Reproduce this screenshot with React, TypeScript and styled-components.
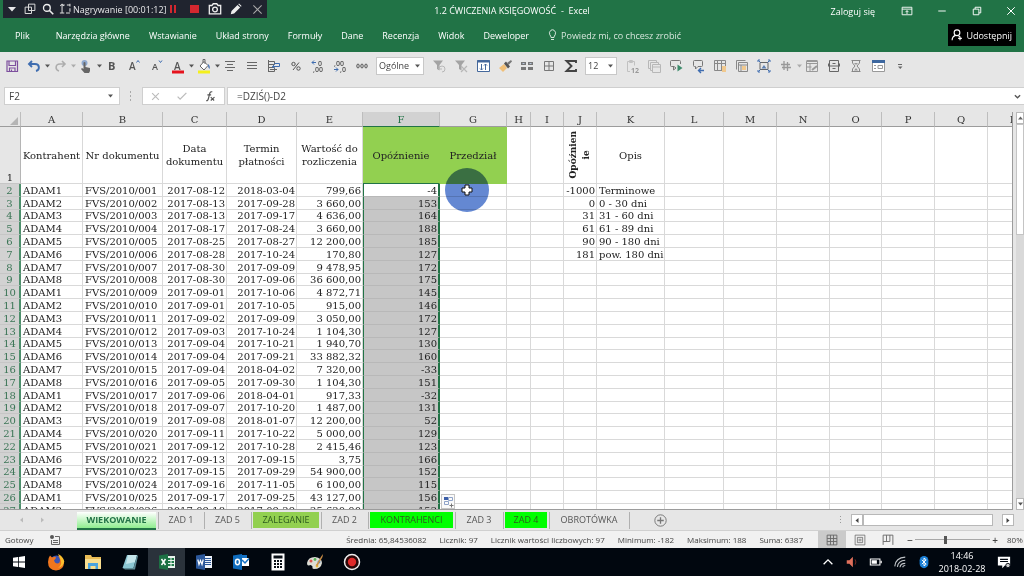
import React from "react";
import styled, { createGlobalStyle, css } from "styled-components";

const ui = `"Open Sans", "Noto Sans", sans-serif`;
const slab = `"DejaVu Serif", serif`;
const green = "#217346";

const GlobalStyle = createGlobalStyle`
  *, *::before, *::after { box-sizing: border-box; }
  body { margin: 0; background: #e6e6e6; font-family: ${ui}; font-size: 9px; color: #444; }
  button, input, select { font: inherit; color: inherit; margin: 0; padding: 0; border: 0; background: none; border-radius: 0; }
  svg { display: block; flex: none; }
`;

const App = styled.div`
  display: flex;
  flex-direction: column;
  height: 100vh;
  overflow: hidden;
`;

/* ---------- title bar and ribbon ---------- */

const Header = styled.header`
  background: ${green};
  color: #fff;
  height: 52px;
  flex: none;
`;

const TitleBar = styled.div`
  display: grid;
  grid-template-columns: 1fr auto 1fr;
  align-items: center;
  height: 20px;
`;

const Recorder = styled.div`
  display: flex;
  align-items: center;
  align-self: start;
  justify-self: start;
  width: 264px;
  height: 18px;
  margin-left: 3px;
  padding: 0 3px 0 2px;
  background: #20242f;
  color: #e8e8ea;
`;

const RecorderText = styled.span`
  white-space: nowrap;
  flex: 1;
  min-width: 0;
`;

const RecorderButton = styled.button`
  display: flex;
  align-items: center;
  justify-content: center;
  width: 14px;
  height: 18px;
  flex: none;
`;

const RecorderGroup = styled.div<{ $gap: number }>`
  display: flex;
  flex: none;
  gap: ${(p) => p.$gap}px;
`;

const DocTitle = styled.h1`
  margin: 2px 0 0;
  font-size: 9px;
  font-weight: 400;
  line-height: 12px;
  white-space: pre;
`;

const WindowControls = styled.div`
  display: flex;
  align-items: center;
  justify-self: end;
  padding: 2px 6px 0 0;
`;

const SignIn = styled.button`
  margin-right: 14px;
  white-space: nowrap;
`;

const WindowButton = styled.button`
  display: flex;
  justify-content: center;
  align-items: center;
  width: 35px;
  height: 16px;
  &:last-child { width: 33px; margin-right: -9px; }
`;

const Ribbon = styled.nav`
  display: flex;
  align-items: center;
  height: 30px;
  padding: 0 8px 0 15px;
`;

const RibbonTab = styled.button<{ $first?: boolean }>`
  margin-right: ${(p) => (p.$first ? 26 : 19)}px;
  white-space: nowrap;
`;

const TellMe = styled.button`
  display: flex;
  align-items: center;
  gap: 4px;
  color: #d6e6dc;
  white-space: nowrap;
`;

const ShareButton = styled.button`
  display: flex;
  align-items: center;
  gap: 3px;
  height: 22px;
  margin-left: auto;
  padding: 0 4px 0 3px;
  background: #000;
  white-space: nowrap;
`;

/* ---------- quick access toolbar ---------- */

const Toolbar = styled.div`
  display: flex;
  align-items: center;
  flex: none;
  height: 27px;
  padding-left: 1px;
`;

const Tool = styled.button<{ $faded?: boolean }>`
  display: flex;
  align-items: center;
  justify-content: center;
  width: 22px;
  height: 22px;
  flex: none;
  opacity: ${(p) => (p.$faded ? 0.6 : 1)};
`;

const CaretButton = styled.button<{ $faded?: boolean }>`
  width: 4px;
  height: 22px;
  flex: none;
  opacity: ${(p) => (p.$faded ? 0.4 : 1)};
`;

const Picker = styled.label<{ $width: number }>`
  display: grid;
  align-items: center;
  width: ${(p) => p.$width}px;
  height: 18px;
  margin: 0 4px 0 3px;
  flex: none;
  background: #fff;
  border: 1px solid #c8c8c8;
  > * { grid-area: 1 / 1; }
  > svg { justify-self: end; margin-right: 3px; pointer-events: none; }
`;

const PickerSelect = styled.select`
  appearance: none;
  width: 100%;
  height: 16px;
  padding-left: 2px;
  font-size: 9px;
  outline: none;
`;

/* ---------- formula bar ---------- */

const FormulaBar = styled.div`
  display: flex;
  align-items: center;
  flex: none;
  height: 33px;
  padding: 1px 0 0 4px;
`;

const NameBox = styled.div`
  display: flex;
  align-items: center;
  width: 116px;
  height: 18px;
  padding: 0 6px 0 4px;
  background: #fff;
  border: 1px solid #cfcfcf;
`;

const NameInput = styled.input`
  flex: 1;
  min-width: 0;
  font-size: 10px;
  outline: none;
`;

const Grip = styled.div`
  display: flex;
  justify-content: center;
  width: 22px;
  flex: none;
`;

const FormulaActions = styled.div`
  display: flex;
  align-items: center;
  justify-content: space-around;
  width: 83px;
  height: 18px;
  margin-right: 2px;
  background: #fff;
  border: 1px solid #cfcfcf;
`;

const FormulaField = styled.div`
  display: flex;
  align-items: center;
  flex: 1;
  height: 18px;
  padding: 0 3px 0 9px;
  background: #fff;
  border: 1px solid #cfcfcf;
  border-right: 0;
`;

/* ---------- sheet ---------- */

const SheetArea = styled.main`
  display: flex;
  flex: 1;
  min-height: 0;
`;

const SheetWindow = styled.div`
  position: relative;
  flex: 1;
  min-width: 0;
  overflow: hidden;
  background: #fff;
  border-right: 1px solid #9c9c9c;
  border-bottom: 1px solid #9c9c9c;
`;

const Sheet = styled.table`
  table-layout: fixed;
  width: 1039px;
  border-collapse: separate;
  border-spacing: 0;
  font-family: ${slab};
  font-size: 10px;
  line-height: 11px;
  color: #222;
`;

const HeadRow = styled.tr`
  height: 15px;
`;

const TitleRow = styled.tr`
  height: 57px;
`;

const DataRow = styled.tr`
  height: 13px;
  &:nth-child(5n + 4) { height: 12px; }
`;

const ColumnHead = styled.th<{ $active?: boolean }>`
  padding: 0;
  font-weight: 400;
  background: ${(p) => (p.$active ? "#d2d2d2" : "#e6e6e6")};
  color: ${(p) => (p.$active ? green : "#333")};
  border-right: 1px solid #bdbdbd;
  border-bottom: 1px solid ${(p) => (p.$active ? green : "#9c9c9c")};
`;

const RowHead = styled.th<{ $active?: boolean }>`
  padding: 0;
  font-weight: 400;
  text-align: center;
  vertical-align: bottom;
  background: #e6e6e6;
  border-right: 1px solid #b5b5b5;
  border-bottom: 1px solid #c6c6c6;
  ${(p) =>
    p.$active &&
    css`
      background: #d2d2d2;
      color: #3b7556;
      vertical-align: middle;
      border-right: 2px solid #4d8f6c;
    `}
`;

const Cell = styled.td<{ $right?: boolean; $state?: "active" | "selected" }>`
  height: inherit;
  padding: 0 1px 0 2px;
  text-align: ${(p) => (p.$right ? "right" : "left")};
  white-space: nowrap;
  border-right: 1px solid #d9d9d9;
  border-bottom: 1px solid #d9d9d9;
  ${(p) =>
    p.$state &&
    css`
      background: ${p.$state === "active" ? "#fff" : "#c6c6c6"};
      border-left: 1px solid ${green};
      border-right: 2px solid ${green};
      border-bottom-color: #b8b8b8;
    `}
`;

const TitleCell = styled.td<{ $fill?: boolean; $edge?: boolean }>`
  padding: 0;
  text-align: center;
  line-height: 13px;
  border-right: 1px solid ${(p) => (p.$fill ? "#92d050" : "#d9d9d9")};
  border-bottom: 1px solid ${(p) => (p.$edge ? green : p.$fill ? "#92d050" : "#d9d9d9")};
  background: ${(p) => (p.$fill ? "#92d050" : "#fff")};
  white-space: pre;
`;

const Rotated = styled.div`
  display: inline-block;
  writing-mode: vertical-rl;
  transform: rotate(180deg);
  font-size: 9px;
  font-weight: 700;
  line-height: 13px;
  vertical-align: middle;
`;

const ClickHalo = styled.div`
  position: absolute;
  left: 445px;
  top: 56px;
  width: 44px;
  height: 44px;
  border-radius: 50%;
  background: #6488d2;
  mix-blend-mode: multiply;
`;

const CursorMark = styled.svg`
  position: absolute;
  left: 461px;
  top: 72px;
`;

const FillOptions = styled.button`
  position: absolute;
  left: 441px;
  top: 382px;
  display: flex;
  align-items: center;
  justify-content: center;
  width: 14px;
  height: 15px;
  background: #fafafa;
  border: 1px solid #c4c4c4;
`;

const VerticalScroll = styled.div`
  display: flex;
  flex-direction: column;
  width: 8px;
  margin-left: 3px;
  flex: none;
  background: #d9d9d9;
`;

const ScrollButton = styled.button`
  display: flex;
  align-items: center;
  justify-content: center;
  min-width: 8px;
  height: 12px;
  flex: none;
  background: #fff;
  border: 1px solid #b8b8b8;
`;

const VerticalThumb = styled.div`
  flex: 0 0 28%;
  background: #fff;
  border: 1px solid #c4c4c4;
`;

const Spacer = styled.div`
  flex: 1;
`;

/* ---------- sheet tabs ---------- */

const TabStrip = styled.div`
  display: flex;
  align-items: center;
  flex: none;
  height: 20px;
  padding-right: 10px;
`;

const TabArrows = styled.div`
  display: flex;
  gap: 14px;
  width: 76px;
  padding-left: 18px;
`;

const TabArrow = styled.button`
  width: 7px;
  height: 8px;
`;

const TabItem = styled.div<{ $width: number }>`
  width: ${(p) => p.$width}px;
  height: 17px;
  padding: 0 2px 0 1px;
  border-right: 1px solid #b0b0b0;
`;

const SheetTab = styled.button<{ $fill?: string; $current?: boolean }>`
  width: 100%;
  height: 16px;
  font-size: 9px;
  text-align: center;
  white-space: nowrap;
  color: ${(p) => (p.$fill ? "#2d5a1e" : "#555")};
  background: ${(p) => p.$fill || "transparent"};
  ${(p) =>
    p.$current &&
    css`
      height: 18px;
      font-weight: 700;
      color: ${green};
      background: linear-gradient(#fff, #8fee8f);
      border-bottom: 2px solid ${green};
    `}
`;

const AddSheet = styled.button`
  margin-left: 24px;
`;

const HorizontalScroll = styled.div`
  display: flex;
  align-items: center;
  width: 163px;
  margin-left: 9px;
  > ${ScrollButton} { width: 12px; }
`;

const HorizontalThumb = styled.div`
  width: 130px;
  height: 12px;
  background: #fff;
  border: 1px solid #b8b8b8;
`;

/* ---------- status bar ---------- */

const StatusBar = styled.footer`
  display: flex;
  align-items: center;
  flex: none;
  height: 18px;
  padding-left: 5px;
  background: #f1f1f1;
  border-top: 1px solid #d0d0d0;
  font-size: 8px;
  white-space: nowrap;
`;

const Summary = styled.div`
  display: flex;
  gap: 13px;
  margin: 0 15px 0 auto;
`;

const ViewButtons = styled.div`
  display: flex;
  margin-right: 3px;
`;

const ViewButton = styled.button<{ $current?: boolean }>`
  display: flex;
  align-items: center;
  justify-content: center;
  width: 28px;
  height: 17px;
  background: ${(p) => (p.$current ? "#cacaca" : "transparent")};
`;

const ZoomStep = styled.button`
  width: 10px;
  height: 14px;
  font-size: 10px;
  line-height: 12px;
  font-weight: 600;
`;

const ZoomRange = styled.input`
  appearance: none;
  width: 75px;
  height: 14px;
  background: linear-gradient(#a8a8a8, #a8a8a8) center / 100% 1px no-repeat;
  &::-webkit-slider-thumb {
    appearance: none;
    width: 3px;
    height: 8px;
    background: #555;
  }
`;

const ZoomValue = styled.output`
  width: 24px;
  padding-left: 7px;
  font-size: 8px;
`;

/* ---------- taskbar ---------- */

const Taskbar = styled.div`
  display: flex;
  align-items: center;
  flex: none;
  height: 28px;
  background: #01070f;
  color: #fff;
`;

const TaskButton = styled.button<{ $active?: boolean }>`
  display: flex;
  align-items: center;
  justify-content: center;
  width: 37px;
  height: 28px;
  background: ${(p) => (p.$active ? "#2a323b" : "transparent")};
`;

const Tray = styled.div`
  display: flex;
  align-items: center;
  margin-left: auto;
  padding-right: 8px;
`;

const TrayButton = styled.button`
  display: flex;
  align-items: center;
  justify-content: center;
  width: 24px;
  height: 28px;
`;

const Clock = styled.time`
  width: 52px;
  margin-right: 4px;
  font-size: 9px;
  line-height: 13px;
  text-align: center;
  white-space: pre;
`;

/* ---------- icons ---------- */

const g = "#666";
const b = "#3f6db0";

const Icon = ({ children, size = 16, stroke = g }: { children: React.ReactNode; size?: number; stroke?: string }) => (
  <svg width={size} height={size} viewBox="0 0 16 16" fill="none" stroke={stroke} strokeWidth="1" aria-hidden="true">
    {children}
  </svg>
);

const Caret = ({ color = "#555" }: { color?: string }) => (
  <svg width="5" height="4" viewBox="0 0 5 4" aria-hidden="true">
    <path d="M0 .5h5L2.5 3.5z" fill={color} />
  </svg>
);

const Glyph = ({ children, x = 3, size = 11, fill = "#555", weight = 600 }: any) => (
  <text x={x} y="12" fontSize={size} fontWeight={weight} fill={fill} stroke="none">
    {children}
  </text>
);

const Funnel = () => <path d="M2 2.500h10L8.500 7v5.500L6 11V7z" fill="#777" stroke="none" />;

const icons: Record<string, React.ReactNode> = {
  save: (
    <Icon stroke="#7d4f9e">
      <path d="M3 3h10.500v10.500H3zM5 3v4.500h6.500V3M5.500 13.500v-3.500h5.500v3.500M7.500 11.500v2" strokeWidth="1.200" />
    </Icon>
  ),
  undo: (
    <Icon stroke={b}>
      <path d="M6 3L3 6l3 3M3.500 6h5.500c5 0 5 6 1 7" strokeWidth="1.900" />
    </Icon>
  ),
  redo: (
    <Icon stroke="#888">
      <path d="M10 3l3 3-3 3M12.500 6H8c-5 0-5 6-1 7" strokeWidth="1.600" />
    </Icon>
  ),
  touch: (
    <Icon stroke="none">
      <circle cx="6.500" cy="5" r="3" fill="#8fa9cf" />
      <path d="M5.500 4.500q1-1 2 0V9l4.500 1v3l-1 2H6.500L3 11l1-1 1.500 1z" fill="#666" />
    </Icon>
  ),
  bold: <Icon><Glyph x={4} weight={700}>B</Glyph></Icon>,
  grow: <Icon><Glyph x={3} size={10}>A</Glyph><path d="M10.500 4.500l1.500-2 1.500 2" stroke={b} /></Icon>,
  shrink: <Icon><Glyph x={4} size={9}>A</Glyph><path d="M11 2.500l1.500 2 1.500-2" stroke={b} /></Icon>,
  fontColor: <Icon><Glyph x={4} size={10}>A</Glyph><path d="M2 14h12" stroke="#e5131d" strokeWidth="3" /></Icon>,
  fill: (
    <Icon>
      <path d="M2 14h12" stroke="#f4f01c" strokeWidth="3" />
      <path d="M4 8l4-4.500 4 4-4 4.500z" fill="#fff" />
      <path d="M7 5V1.500h2V6" />
      <path d="M12 6q2.500 2 1.500 5-1.500-1-1.500-5z" fill={b} stroke="none" />
    </Icon>
  ),
  center: <Icon><path d="M3 3.500h10M5 6.500h6M3 9.500h10M5 12.500h6" /></Icon>,
  lines: <Icon><path d="M3 4.500h10M3 7.500h10M3 10.500h10" /></Icon>,
  wrap: (
    <Icon>
      <path d="M2.500 2v12M2.500 3.500h6v3h-6M2.500 9.500h6v4h-6M4 11.500h7" />
      <path d="M8.500 5.500h5v3h-7M8.500 6.500l-2 2 2 2" stroke={b} />
    </Icon>
  ),
  percent: (
    <Icon stroke="#555">
      <circle cx="5.500" cy="6" r="1.700" />
      <circle cx="10.500" cy="10.500" r="1.700" />
      <path d="M11 4.500l-6 7.500" />
    </Icon>
  ),
  decMore: (
    <Icon>
      <path d="M2 4.500h4M4 2.500l-2 2 2 2" stroke={b} />
      <text x="8" y="8" fontSize="7" fontWeight="600" fill="#555" stroke="none">0</text>
      <text x="3" y="14" fontSize="7" fontWeight="600" fill="#555" stroke="none">,00</text>
    </Icon>
  ),
  decLess: (
    <Icon>
      <text x="2" y="8" fontSize="7" fontWeight="600" fill="#555" stroke="none">,00</text>
      <text x="8" y="14" fontSize="7" fontWeight="600" fill="#555" stroke="none">,0</text>
      <path d="M2 11.500h4M4 9.500l2 2-2 2" stroke={b} />
    </Icon>
  ),
  thousands: (
    <Icon stroke="#555">
      <ellipse cx="4" cy="8" rx="1.200" ry="2" />
      <ellipse cx="8" cy="8" rx="1.200" ry="2" />
      <ellipse cx="12" cy="8" rx="1.200" ry="2" />
    </Icon>
  ),
  filterAgain: <Icon><Funnel /><path d="M8 11a3 3 0 1 1 3 3M8 8v3h3" stroke="#999" /></Icon>,
  filterClear: <Icon><Funnel /><path d="M8 8l6 6M14 8l-6 6" stroke="#999" strokeWidth="1.200" /></Icon>,
  sort: (
    <Icon stroke="#44689c">
      <path d="M2.500 2.500h12v11h-12z" fill="#fff" />
      <path d="M2 3.500h13" strokeWidth="2" />
      <path d="M6.500 6v6M5 10.500l1.500 1.500L8 10.500M10.500 12V6M9 7.500L10.500 6 12 7.500" />
    </Icon>
  ),
  brush: (
    <Icon stroke="none">
      <path d="M2 10l5-4 3 4-4 4z" fill="#f0bf78" />
      <path d="M7 5.500l2-2 4 5-2 2z" fill="#555" />
      <path d="M10 5l4-3 1 1.500-3.500 3.500z" fill="#777" />
    </Icon>
  ),
  blocks: (
    <Icon stroke="none">
      <path d="M2 4h5v3H2zM9 4h5v3H9zM2 9h5v3H2zM9 9h5v3H9z" fill="#777" />
      <path d="M3.500 5.500h2M10.500 5.500h2" stroke="#b9c7dc" />
    </Icon>
  ),
  borders: <Icon><path d="M3.500 3.500h9v9h-9zM8 3.500v9M3.500 8h9" stroke="#777" /></Icon>,
  sum: <Icon><path d="M13 5V3H3.500l5 5-5 5H13v-2" stroke="#444" strokeWidth="1.900" /></Icon>,
  paste: (
    <Icon>
      <path d="M6 13.500H3.500v-10h7v4M5.500 2.500h3v2h-3z" stroke="#aaa" />
      <text x="7" y="15" fontSize="7" fontWeight="700" fill="#666" stroke="none">12</text>
    </Icon>
  ),
  copies: <Icon stroke="#999"><path d="M4 10.500H2.500v-8h8V4M6 12.500H4.500v-8h8V6M6.500 6.500h8v8h-8zM6.500 9h8" /></Icon>,
  comment: <Icon stroke="#777"><path d="M8 10L6 8.500H3.500q-1 0-1-1v-4q0-1 1-1h8q1 0 1 1V6M5.500 9v3L8 10" /><path d="M9.500 6.500l5 3.500-5 3.500z" fill="#3d8c6c" stroke="none" /></Icon>,
  commentBack: <Icon stroke="#777"><path d="M4.500 2.500h7q1 0 1 1v4q0 1-1 1H8l-2.500 2.500V8.500h-1q-1 0-1-1v-4q0-1 1-1z" /><path d="M14 12.500H8.500M11 10l-2.500 2.500L11 15" stroke={b} strokeWidth="1.400" /></Icon>,
  tableCols: <Icon stroke="#888"><path d="M2.500 2.500h11v10h-11zM2.500 5.500h11M5.500 2.500v10M9.500 2.500v10" /><path d="M10 8h4v6h-4z" fill="#f1c98e" stroke="none" /></Icon>,
  tableStack: <Icon stroke="#888"><path d="M2.500 11.500v-9h9M4.500 4.500h9v9h-9zM4.500 7h9M7 7v6.500" /><path d="M8 8h4v4H8z" fill="#f1c98e" stroke="none" /></Icon>,
  group: (
    <Icon>
      <path d="M4 4.500h8v7H4z" /><path d="M5.500 10.500L8 7l2.500 3.500z" fill="#5c7fb1" stroke="none" />
      <path d="M2 4V2h2M12 2h2v2M14 12v2h-2M4 14H2v-2M2.500 2.500l2 2M13.500 2.500l-2 2M2.500 13.500l2-2M13.500 13.500l-2-2" stroke={b} />
    </Icon>
  ),
  hash: <Icon><path d="M6 3v9M9.500 4v9M3 6.500h9M4 9.500h9" stroke="#666" strokeWidth="1.300" /></Icon>,
  sheetEdit: <Icon><path d="M2.500 3.500h11v10h-11zM2.500 5.500h11M2.500 9h5M6 5.500v8" /><path d="M2.500 3h11" strokeWidth="2" /><path d="M8 12l5-4" strokeWidth="2" /></Icon>,
  drawer: <Icon stroke="#666"><path d="M3.500 2.500h9v11h-9zM2 8h12M6.500 5.500h3M6.500 10.500h3M2.500 5.500v2.500M13.500 5.500v2.500" /></Icon>,
  hourglass: <Icon><path d="M3.500 2.500h9M3.500 13.500h9M4.500 3v2L7 8l-2.500 3v2.500M11.500 3v2L9 8l2.500 3v2.500" stroke="#888" /><path d="M6 12.500L8 10l2 2.500zM6 5h4L8 7z" fill="#999" stroke="none" /></Icon>,
  form: <Icon stroke="#999"><path d="M2.500 3.500h12v10h-12z" fill="#fff" /><path d="M2 3.500h13" stroke="#3d679f" strokeWidth="3" /><path d="M4 7.500h2M4 10.500h2M8 7.500h4.500v3H8z" stroke="#999" /></Icon>,
  more: <Icon><path d="M6 6.500h4" /><path d="M6 8.500h4.500l-2.250 2.500z" fill={g} stroke="none" /></Icon>,
};

type ToolSpec = { id: string; label: string; menu?: boolean; faded?: boolean };

const toolsLeft: ToolSpec[] = [
  { id: "save", label: "Zapisz" },
  { id: "undo", label: "Cofnij", menu: true },
  { id: "redo", label: "Ponów", menu: true, faded: true },
  { id: "touch", label: "Tryb dotyku", menu: true },
  { id: "bold", label: "Pogrubienie" },
  { id: "grow", label: "Zwiększ czcionkę" },
  { id: "shrink", label: "Zmniejsz czcionkę" },
  { id: "fontColor", label: "Kolor czcionki", menu: true },
  { id: "fill", label: "Kolor wypełnienia", menu: true },
  { id: "center", label: "Wyśrodkuj" },
  { id: "lines", label: "Wyrównaj do środka" },
  { id: "wrap", label: "Zawijaj tekst" },
  { id: "percent", label: "Procent" },
  { id: "decMore", label: "Zwiększ dziesiętne" },
  { id: "decLess", label: "Zmniejsz dziesiętne" },
  { id: "thousands", label: "Zapis dziesiętny" },
];

const toolsMiddle: ToolSpec[] = [
  { id: "filterAgain", label: "Zastosuj filtr ponownie", faded: true },
  { id: "filterClear", label: "Wyczyść filtr", faded: true },
  { id: "sort", label: "Sortuj" },
  { id: "brush", label: "Malarz formatów" },
  { id: "blocks", label: "Scal komórki" },
  { id: "borders", label: "Obramowanie" },
  { id: "sum", label: "Autosumowanie" },
];

const toolsRight: ToolSpec[] = [
  { id: "paste", label: "Wklej wartości", faded: true },
  { id: "copies", label: "Kopiuj", faded: true },
  { id: "comment", label: "Następny komentarz" },
  { id: "commentBack", label: "Poprzedni komentarz" },
  { id: "tableCols", label: "Kolumny tabeli" },
  { id: "tableStack", label: "Tabela" },
  { id: "group", label: "Zaznacz obiekty" },
  { id: "hash", label: "Siatka", menu: true, faded: true },
  { id: "sheetEdit", label: "Edytuj arkusz", faded: true },
  { id: "drawer", label: "Formularz danych" },
  { id: "hourglass", label: "Przelicz" },
  { id: "form", label: "Okno formularza" },
  { id: "more", label: "Dostosuj pasek" },
];

const Tools = ({ items }: { items: ToolSpec[] }) => (
  <>
    {items.map((t) => (
      <React.Fragment key={t.id}>
        <Tool aria-label={t.label} $faded={t.faded}>{icons[t.id]}</Tool>
        {t.menu && (
          <CaretButton aria-label={`${t.label}: opcje`} $faded={t.faded}><Caret /></CaretButton>
        )}
      </React.Fragment>
    ))}
  </>
);

/* ---------- data ---------- */

const ribbonTabs = ["Plik", "Narzędzia główne", "Wstawianie", "Układ strony", "Formuły", "Dane", "Recenzja", "Widok", "Deweloper"];

const columns: [string, number][] = [
  ["A", 62], ["B", 80], ["C", 64], ["D", 70], ["E", 66], ["F", 77], ["G", 67], ["H", 24], ["I", 33],
  ["J", 33], ["K", 68], ["L", 59], ["M", 53], ["N", 53], ["O", 52], ["P", 53], ["Q", 53], ["R", 52],
];

const rows: [string, string, string, number][] = [
  ["2017-08-12", "2018-03-04", "799,66", -4],
  ["2017-08-13", "2017-09-28", "3 660,00", 153],
  ["2017-08-13", "2017-09-17", "4 636,00", 164],
  ["2017-08-17", "2017-08-24", "3 660,00", 188],
  ["2017-08-25", "2017-08-27", "12 200,00", 185],
  ["2017-08-28", "2017-10-24", "170,80", 127],
  ["2017-08-30", "2017-09-09", "9 478,95", 172],
  ["2017-08-30", "2017-09-06", "36 600,00", 175],
  ["2017-09-01", "2017-10-06", "4 872,71", 145],
  ["2017-09-01", "2017-10-05", "915,00", 146],
  ["2017-09-02", "2017-09-09", "3 050,00", 172],
  ["2017-09-03", "2017-10-24", "1 104,30", 127],
  ["2017-09-04", "2017-10-21", "1 940,70", 130],
  ["2017-09-04", "2017-09-21", "33 882,32", 160],
  ["2017-09-04", "2018-04-02", "7 320,00", -33],
  ["2017-09-05", "2017-09-30", "1 104,30", 151],
  ["2017-09-06", "2018-04-01", "917,33", -32],
  ["2017-09-07", "2017-10-20", "1 487,00", 131],
  ["2017-09-08", "2018-01-07", "12 200,00", 52],
  ["2017-09-11", "2017-10-22", "5 000,00", 129],
  ["2017-09-12", "2017-10-28", "2 415,46", 123],
  ["2017-09-13", "2017-09-15", "3,75", 166],
  ["2017-09-15", "2017-09-29", "54 900,00", 152],
  ["2017-09-16", "2017-11-05", "6 100,00", 115],
  ["2017-09-17", "2017-09-25", "43 127,00", 156],
  ["2017-09-18", "2017-09-29", "25 620,00", 152],
];

const ranges: [string, string][] = [
  ["-1000", "Terminowe"],
  ["0", "0 - 30 dni"],
  ["31", "31 - 60 dni"],
  ["61", "61 - 89 dni"],
  ["90", "90 - 180 dni"],
  ["181", "pow. 180 dni"],
];

const sheetTabs: { name: string; width: number; fill?: string; current?: boolean }[] = [
  { name: "WIEKOWANIE", width: 83, current: true },
  { name: "ZAD 1", width: 46 },
  { name: "ZAD 5", width: 47 },
  { name: "ZALEGANIE", width: 70, fill: "#92d050" },
  { name: "ZAD 2", width: 47 },
  { name: "KONTRAHENCI", width: 87, fill: "#00ff00" },
  { name: "ZAD 3", width: 48 },
  { name: "ZAD 4", width: 46, fill: "#00ff00" },
  { name: "OBROTÓWKA", width: 80 },
];

const summary = ["Średnia: 65,84536082", "Licznik: 97", "Licznik wartości liczbowych: 97", "Minimum: -182", "Maksimum: 188", "Suma: 6387"];

const taskIcons: { label: string; active?: boolean; icon: React.ReactNode }[] = [
  { label: "Start", icon: <svg width="14" height="14" viewBox="0 0 14 14" fill="#fff"><path d="M1 2.800l5-.700v4.500H1zM6.800 2L13 1v5.600H6.800zM1 7.400h5V12l-5-.700zM6.800 7.400H13V13l-6.200-.900z" /></svg> },
  {
    label: "Firefox",
    icon: (
      <svg width="18" height="18" viewBox="0 0 18 18">
        <circle cx="9.500" cy="9.500" r="7" fill="#3b55b5" />
        <path d="M1 9Q1 5 3 2.500L5 4.500Q9 3 9 5L7 7.500l1 2q2.500 2 4.500 0Q14 6 11 3q5 1 6 6 0 8-8 8.500Q1 17 1 9z" fill="#f0761e" />
        <path d="M11 1q5 2 6.300 7.500-1 5-6.300 6.500 4-3 3-7-1-3-3-7z" fill="#fbc02d" />
      </svg>
    ),
  },
  {
    label: "Eksplorator plików",
    icon: (
      <svg width="18" height="16" viewBox="0 0 18 16">
        <path d="M1 1h6l1 2h9v12H1z" fill="#e9bd57" /><path d="M1 5h16v10H1z" fill="#f9de8f" />
        <path d="M4 9h10v6h-2.500v-3h-5v3H4z" fill="#4aa3df" />
      </svg>
    ),
  },
  {
    label: "Notatnik",
    icon: (
      <svg width="18" height="18" viewBox="0 0 18 18">
        <path d="M6 2h10l-3.500 13H1.500z" fill="#8cc7d3" /><path d="M7 2h9l-2 7-9 2z" fill="#c4e5ea" /><path d="M1.500 15l11 0 3.500-13 1 1-3 13.500H4z" fill="#5d8b96" />
      </svg>
    ),
  },
  {
    label: "Excel",
    active: true,
    icon: (
      <svg width="18" height="18" viewBox="0 0 18 18">
        <path d="M8 3h9v12H8z" fill="#e9f3ed" /><path d="M10 5h2.500v2H10zM13.500 5H16v2h-2.500zM10 8h2.500v2H10zM13.500 8H16v2h-2.500zM10 11h2.500v2H10zM13.500 11H16v2h-2.500z" fill="#1f7a48" />
        <path d="M1 2.500L10 1v16l-9-1.500z" fill="#1d7044" /><path d="M3.500 6l4 6M7.500 6l-4 6" stroke="#fff" strokeWidth="1.500" />
      </svg>
    ),
  },
  {
    label: "Word",
    icon: (
      <svg width="18" height="18" viewBox="0 0 18 18">
        <path d="M8 3h9v12H8z" fill="#eef3fa" /><path d="M10 5.500h6M10 7.500h6M10 9.500h6M10 11.500h6" stroke="#2b579a" />
        <path d="M1 2.500L10 1v16l-9-1.500z" fill="#2b579a" /><path d="M2.800 6.500L4 11.500l1.500-4 1.500 4 1.200-5" stroke="#fff" strokeWidth="1.200" fill="none" />
      </svg>
    ),
  },
  {
    label: "Outlook",
    icon: (
      <svg width="18" height="18" viewBox="0 0 18 18">
        <path d="M8 2h7v4H8z" fill="#1471c4" /><path d="M8 5h9v8H8z" fill="#fff" /><path d="M10 7l3 3 4-4.500" stroke="#1471c4" strokeWidth="1.500" fill="none" />
        <path d="M1 2.500L10 1v16l-9-1.500z" fill="#0f6cbd" /><ellipse cx="5.500" cy="9" rx="2" ry="2.700" stroke="#fff" strokeWidth="1.500" fill="none" />
      </svg>
    ),
  },
  {
    label: "Kalkulator",
    icon: (
      <svg width="14" height="18" viewBox="0 0 14 18">
        <rect x=".500" y=".500" width="13" height="17" fill="#fff" /><path d="M2.500 2.500h9v3h-9z" fill="#0b1118" />
        <path d="M3 8h2M6 8h2M9 8h2M3 11h2M6 11h2M9 11h2M3 14h2M6 14h2M9 14h2" stroke="#0b1118" strokeWidth="1.800" />
      </svg>
    ),
  },
  {
    label: "Paint",
    icon: (
      <svg width="18" height="18" viewBox="0 0 18 18">
        <path d="M1 10q1-6 8-6 7 1 7 6-1 6-8 6-2 0-1.500-2.500Q5 11 3 12.500 1 13 1 10z" fill="#dcdcd4" />
        <circle cx="5" cy="8" r="1.500" fill="#d9534f" /><circle cx="9" cy="6.500" r="1.400" fill="#5cb85c" /><circle cx="13" cy="9" r="1.400" fill="#3f7fd0" /><circle cx="11" cy="13" r="1.400" fill="#e9b63a" />
        <path d="M10 12l5.500-9 1.500-2-.500 3-5 9z" fill="#c98d46" />
      </svg>
    ),
  },
  {
    label: "Rejestrator ekranu",
    icon: (
      <svg width="18" height="18" viewBox="0 0 18 18">
        <circle cx="9" cy="9" r="7.500" fill="#2a0808" stroke="#eee" strokeWidth="1.500" /><circle cx="9" cy="9" r="4.200" fill="#e02a2a" />
      </svg>
    ),
  },
];

const trayIcons: { label: string; icon: React.ReactNode }[] = [
  { label: "Pokaż ukryte ikony", icon: <Icon size={14} stroke="#fff"><path d="M3 10.500l5-5 5 5" strokeWidth="1.500" /></Icon> },
  { label: "Głośność", icon: <Icon size={14}><path d="M2 6h3l4-4v12L5 10H2z" fill="#e0705c" stroke="none" /><path d="M11.500 5q2 3 0 6" stroke="#7c2a22" /></Icon> },
  { label: "Bateria", icon: <Icon size={14} stroke="#fff"><path d="M1.500 4.500h11v7h-11zM14 6.500v3" strokeWidth="1.200" /><path d="M3 6h6v4H3z" fill="#fff" stroke="none" /></Icon> },
  { label: "Sieć", icon: <Icon size={14} stroke="#bfc3c7"><path d="M2 13Q3 3 14 2.500M5 13.500Q6 6.500 14 6M8 14Q8.500 9.500 14 9.500M11 14q.500-2 3-2" strokeWidth="1.300" /></Icon> },
  { label: "Bluetooth", icon: <Icon size={14} stroke="#fff"><rect x="3" y="1" width="10" height="14" rx="5" fill="#1a7fd6" stroke="none" /><path d="M5.500 5.500l5 5-2.500 2v-9l2.500 2-5 5" strokeWidth="1.100" /></Icon> },
];

const RecorderBar = () => (
  <Recorder>
    <RecorderGroup $gap={4}>
      <RecorderButton aria-label="Menu nagrywania"><svg width="8" height="6" viewBox="0 0 8 6"><path d="M0 1h8L4 5.500z" fill="#e8e8ea" /></svg></RecorderButton>
      <RecorderButton aria-label="Okna"><Icon size={12} stroke="#ddd"><path d="M6 1.500h8.500V10H6zM1.500 5.500h8.500V14H1.500z" strokeWidth="1.300" /></Icon></RecorderButton>
      <RecorderButton aria-label="Lupa"><Icon size={12} stroke="#eee"><circle cx="6.500" cy="6.500" r="4.500" strokeWidth="1.800" /><path d="M10 10l5 5" strokeWidth="2.200" /></Icon></RecorderButton>
      <RecorderButton aria-label="Obszar nagrywania"><Icon size={14} stroke="#ddd"><path d="M3.500 4v9M1 12.500h5M3.500 3.500h3M9 3.500h4M12.500 2v3M12.500 7v4M12.500 12.500H8M1.500 4.500l2-2 2 2" strokeWidth="1.200" /></Icon></RecorderButton>
    </RecorderGroup>
    <RecorderText>Nagrywanie [00:01:12]</RecorderText>
    <RecorderGroup $gap={7}>
      <RecorderButton aria-label="Wstrzymaj"><svg width="7" height="8" viewBox="0 0 7 8"><path d="M0 0h2v8H0zM4 0h2v8H4z" fill="#d3272f" /></svg></RecorderButton>
      <RecorderButton aria-label="Zatrzymaj"><svg width="9" height="8" viewBox="0 0 9 8"><path d="M0 0h9v8H0z" fill="#d3272f" /></svg></RecorderButton>
      <RecorderButton aria-label="Zrzut ekranu"><Icon size={14} stroke="#eee"><path d="M1.500 4h3L6 2h4l1.500 2h3v9.500h-13z" strokeWidth="1.500" /><circle cx="8" cy="8.500" r="2.700" strokeWidth="1.500" /></Icon></RecorderButton>
      <RecorderButton aria-label="Rysuj"><Icon size={12} stroke="none"><path d="M1 15l1-4.500L10 2.500 13.500 6l-8 8zM11 1.500l1-1 3.500 3.500-1 1z" fill="#eee" /></Icon></RecorderButton>
      <RecorderButton aria-label="Zamknij nagrywanie"><Icon size={11} stroke="#aaa"><path d="M2 2l12 12M14 2L2 14" strokeWidth="1.500" /></Icon></RecorderButton>
    </RecorderGroup>
  </Recorder>
);

const SheetGrid = () => (
  <Sheet>
    <colgroup>
      <col width={21} />
      {columns.map(([name, width]) => <col key={name} width={width} />)}
    </colgroup>
    <thead>
      <HeadRow>
        <ColumnHead><svg width="20" height="13" viewBox="0 0 20 13"><path d="M18 4v8h-8z" fill="#b5b5b5" /></svg></ColumnHead>
        {columns.map(([name]) => <ColumnHead key={name} scope="col" $active={name === "F"}>{name}</ColumnHead>)}
      </HeadRow>
    </thead>
    <tbody>
      <TitleRow>
        <RowHead scope="row">1</RowHead>
        <TitleCell>Kontrahent</TitleCell>
        <TitleCell>Nr dokumentu</TitleCell>
        <TitleCell>{"Data\ndokumentu"}</TitleCell>
        <TitleCell>{"Termin\npłatności"}</TitleCell>
        <TitleCell>{"Wartość do\nrozliczenia"}</TitleCell>
        <TitleCell $fill $edge>Opóźnienie</TitleCell>
        <TitleCell $fill>Przedział</TitleCell>
        <TitleCell />
        <TitleCell />
        <TitleCell><Rotated>{"Opóźnien\nie"}</Rotated></TitleCell>
        <TitleCell>Opis</TitleCell>
        {columns.slice(11).map(([name]) => <TitleCell key={name} />)}
      </TitleRow>
      {rows.map(([issued, due, amount, delay], i) => (
        <DataRow key={i}>
          <RowHead scope="row" $active>{i + 2}</RowHead>
          <Cell>{`ADAM${(i % 8) + 1}`}</Cell>
          <Cell>{`FVS/2010/${String(i + 1).padStart(3, "0")}`}</Cell>
          <Cell $right>{issued}</Cell>
          <Cell $right>{due}</Cell>
          <Cell $right>{amount}</Cell>
          <Cell $right $state={i === 0 ? "active" : "selected"}>{delay}</Cell>
          <Cell />
          <Cell />
          <Cell />
          <Cell $right>{ranges[i]?.[0]}</Cell>
          <Cell>{ranges[i]?.[1]}</Cell>
          {columns.slice(11).map(([name]) => <Cell key={name} />)}
        </DataRow>
      ))}
    </tbody>
  </Sheet>
);

export default function SpreadsheetApp() {
  return (
    <App>
      <GlobalStyle />
      <Header>
        <TitleBar>
          <RecorderBar />
          <DocTitle>{"1.2 ĆWICZENIA KSIĘGOWOŚĆ  -  Excel"}</DocTitle>
          <WindowControls>
            <SignIn>Zaloguj się</SignIn>
            <WindowButton aria-label="Opcje wstążki"><Icon size={12} stroke="#fff"><path d="M1.500 3h13v10h-13zM1.500 5.500h13M8 12V7.500M6 9.500l2-2 2 2" strokeWidth="1.200" /></Icon></WindowButton>
            <WindowButton aria-label="Minimalizuj"><Icon size={10} stroke="#fff"><path d="M2 8h12" strokeWidth="1.500" /></Icon></WindowButton>
            <WindowButton aria-label="Przywróć"><Icon size={10} stroke="#fff"><path d="M2 5h9v9H2zM5 5V2h9v9h-3" strokeWidth="1.500" /></Icon></WindowButton>
            <WindowButton aria-label="Zamknij"><Icon size={10} stroke="#fff"><path d="M2 2l12 12M14 2L2 14" strokeWidth="1.600" /></Icon></WindowButton>
          </WindowControls>
        </TitleBar>
        <Ribbon>
          {ribbonTabs.map((t, i) => <RibbonTab key={t} $first={i === 0}>{t}</RibbonTab>)}
          <TellMe>
            <svg width="9" height="12" viewBox="0 0 9 12" fill="none" stroke="#d6e6dc"><path d="M3 8.500Q3 7 1.800 5.800 0.500 3 3 1.200q1.500-.900 3 0Q8.500 3 7.200 5.800 6 7 6 8.500zM3 10.500h3" /></svg>
            Powiedz mi, co chcesz zrobić
          </TellMe>
          <ShareButton>
            <Icon size={12} stroke="#fff"><circle cx="8" cy="5" r="3.800" strokeWidth="1.500" /><path d="M1.500 15q0-5 4.500-6.500M10 9l2 1.500M12 10v5M9.500 12.500h5" strokeWidth="1.500" /></Icon>
            Udostępnij
          </ShareButton>
        </Ribbon>
      </Header>

      <Toolbar>
        <Tools items={toolsLeft} />
        <Picker $width={48}>
          <PickerSelect aria-label="Format liczb"><option>Ogólne</option></PickerSelect>
          <Caret />
        </Picker>
        <Tools items={toolsMiddle} />
        <Picker $width={32}>
          <PickerSelect aria-label="Rozmiar czcionki"><option>12</option></PickerSelect>
          <Caret />
        </Picker>
        <Tools items={toolsRight} />
      </Toolbar>

      <FormulaBar>
        <NameBox>
          <NameInput aria-label="Pole nazwy" defaultValue="F2" />
          <button aria-label="Lista nazw"><Caret /></button>
        </NameBox>
        <Grip><svg width="2" height="10" viewBox="0 0 2 10"><path d="M0 0h1v2H0zM0 4h1v2H0zM0 8h1v2H0z" fill="#aaa" /></svg></Grip>
        <FormulaActions>
          <button aria-label="Anuluj"><Icon size={9} stroke="#bbb"><path d="M2 2l12 12M14 2L2 14" strokeWidth="2" /></Icon></button>
          <button aria-label="Wpis"><Icon size={10} stroke="#bbb"><path d="M1 9l4 4L15 3" strokeWidth="2" /></Icon></button>
          <button aria-label="Wstaw funkcję"><Icon size={12} stroke="#555"><path d="M3 14q2 1 3-3l1.500-6Q8.500 1.500 11 2.500M4.500 6.500h5M9 9.500l4.500 4.500M14 9.500L9 14" strokeWidth="1.500" /></Icon></button>
        </FormulaActions>
        <FormulaField>
          <NameInput aria-label="Pasek formuły" defaultValue="=DZIŚ()-D2" />
          <button aria-label="Rozwiń pasek formuły"><Icon size={7} stroke="#555"><path d="M2 5l6 6 6-6" strokeWidth="3" /></Icon></button>
        </FormulaField>
      </FormulaBar>

      <SheetArea>
        <SheetWindow>
          <SheetGrid />
          <ClickHalo />
          <CursorMark width="12" height="12" viewBox="0 0 12 12" aria-hidden="true">
            <path d="M4 1h4v3h3v4H8v3H4V8H1V4h3z" fill="#fff" stroke="#111" />
          </CursorMark>
          <FillOptions aria-label="Opcje autowypełniania">
            <svg width="11" height="12" viewBox="0 0 11 12"><path d="M1 1h4v3H1z" fill="#3b5ea8" /><path d="M1.500 5.500h4v3h-4zM5.500 1.500h4v3h-4z" fill="none" stroke="#8fa3c8" /><path d="M8.500 7.500v4M6.500 9.500h4" stroke="#777" /></svg>
          </FillOptions>
        </SheetWindow>
        <VerticalScroll>
          <ScrollButton aria-label="Przewiń w górę"><svg width="5" height="4" viewBox="0 0 5 4"><path d="M0 3.500h5L2.500.500z" fill="#666" /></svg></ScrollButton>
          <VerticalThumb />
          <Spacer />
          <ScrollButton aria-label="Przewiń w dół"><Caret /></ScrollButton>
        </VerticalScroll>
      </SheetArea>

      <TabStrip>
        <TabArrows>
          <TabArrow aria-label="Poprzedni arkusz"><svg width="7" height="8" viewBox="0 0 7 8"><path d="M5 1.500v5L2 4z" fill="#bbb" /></svg></TabArrow>
          <TabArrow aria-label="Następny arkusz"><svg width="7" height="8" viewBox="0 0 7 8"><path d="M2 1.500v5L5 4z" fill="#bbb" /></svg></TabArrow>
        </TabArrows>
        {sheetTabs.map((t) => (
          <TabItem key={t.name} $width={t.width}>
            <SheetTab $fill={t.fill} $current={t.current}>{t.name}</SheetTab>
          </TabItem>
        ))}
        <AddSheet aria-label="Nowy arkusz"><Icon size={13} stroke="#777"><circle cx="8" cy="8" r="7" strokeWidth="1.200" /><path d="M8 4v8M4 8h8" strokeWidth="1.600" /></Icon></AddSheet>
        <Spacer />
        <svg width="2" height="8" viewBox="0 0 2 8"><path d="M0 0h1v1H0zM0 3h1v1H0zM0 6h1v1H0z" fill="#999" /></svg>
        <HorizontalScroll>
          <ScrollButton aria-label="Przewiń w lewo"><svg width="4" height="5" viewBox="0 0 4 5"><path d="M3.500 0v5L.500 2.500z" fill="#444" /></svg></ScrollButton>
          <HorizontalThumb />
          <Spacer />
          <ScrollButton aria-label="Przewiń w prawo"><svg width="4" height="5" viewBox="0 0 4 5"><path d="M.500 0v5l3-2.500z" fill="#444" /></svg></ScrollButton>
        </HorizontalScroll>
      </TabStrip>

      <StatusBar>
        <span>Gotowy</span>
        <svg width="32" height="10" viewBox="0 0 32 10" fill="none" stroke="#666"><path d="M21 1.500h4.500v8h-8V5M19 5.500h5M19 7.500h5" /><circle cx="18" cy="2" r="2" fill="#555" stroke="none" /></svg>
        <Summary>{summary.map((s) => <span key={s}>{s}</span>)}</Summary>
        <ViewButtons>
          <ViewButton $current aria-label="Normalny"><Icon size={12}><path d="M1.500 1.500h13v13h-13zM6 1.500v13M10 1.500v13M1.500 6h13M1.500 10h13" strokeWidth="1.200" /></Icon></ViewButton>
          <ViewButton aria-label="Układ strony"><Icon size={12}><path d="M1.500 1.500h13v13h-13zM4.500 4.500h7v7h-7zM6 7h4M6 9h4" /></Icon></ViewButton>
          <ViewButton aria-label="Podział stron"><Icon size={12}><path d="M1.500 14.500v-13h13v13M1.500 10h9V1.500M6 1.500V10" strokeWidth="1.200" /></Icon></ViewButton>
        </ViewButtons>
        <ZoomStep aria-label="Pomniejsz">−</ZoomStep>
        <ZoomRange type="range" aria-label="Powiększenie" min={0} max={100} defaultValue={40} />
        <ZoomStep aria-label="Powiększ">+</ZoomStep>
        <ZoomValue>80%</ZoomValue>
      </StatusBar>

      <Taskbar>
        {taskIcons.map((t) => <TaskButton key={t.label} aria-label={t.label} $active={t.active}>{t.icon}</TaskButton>)}
        <Tray>
          {trayIcons.map((t) => <TrayButton key={t.label} aria-label={t.label}>{t.icon}</TrayButton>)}
          <Clock>{"14:46\n2018-02-28"}</Clock>
          <TrayButton aria-label="Centrum akcji"><Icon size={14} stroke="#01070f"><path d="M1 2h14v10H9l-3 3v-3H1z" fill="#fff" stroke="none" /><path d="M3.500 5h9M3.500 7.500h9" strokeWidth="1.200" /><circle cx="12.500" cy="12" r="2.500" fill="#ccc" /></Icon></TrayButton>
        </Tray>
      </Taskbar>
    </App>
  );
}
